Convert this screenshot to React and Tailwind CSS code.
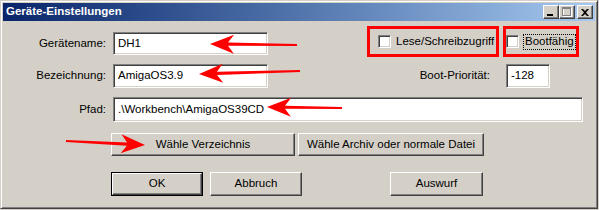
import React from "react";

const raised =
  "border border-t-white border-l-white border-b-[#404040] border-r-[#404040] shadow-[inset_-1px_-1px_0_#808080,inset_1px_1px_0_#d4d0c8] bg-[#d4d0c8]";
const sunken =
  "border border-t-[#808080] border-l-[#808080] border-b-white border-r-white shadow-[inset_1px_1px_0_#404040,inset_-1px_-1px_0_#d4d0c8] bg-white";

// red annotation arrows, tail -> tip
const arrows = [
  [297, 45, 210, 44],
  [300, 71, 199, 74],
  [342, 108, 267, 107],
  [66, 141, 145, 145],
];

function arrowPoints(x1, y1, x2, y2) {
  const L = 24;
  const W = 9.5;
  const t = 1.6;
  const notch = 6;
  const len = Math.hypot(x2 - x1, y2 - y1);
  const ux = (x2 - x1) / len;
  const uy = (y2 - y1) / len;
  const nx = -uy;
  const ny = ux;
  const bx = x2 - ux * L;
  const by = y2 - uy * L;
  const kx = x2 - ux * (L - notch);
  const ky = y2 - uy * (L - notch);
  const pts = [
    [x2, y2],
    [bx + nx * W, by + ny * W],
    [kx + nx * t, ky + ny * t],
    [x1 + nx * t * 0.7, y1 + ny * t * 0.7],
    [x1 - nx * t * 0.7, y1 - ny * t * 0.7],
    [kx - nx * t, ky - ny * t],
    [bx - nx * W, by - ny * W],
  ];
  return pts.map((p) => p.join(",")).join(" ");
}

function Field({ value, className }) {
  return (
    <div className={`${sunken} flex items-center pl-[4px] ${className}`}>
      {value}
    </div>
  );
}

function Button({ children, className }) {
  return (
    <div className={`${raised} flex items-center justify-center ${className}`}>
      {children}
    </div>
  );
}

function Checkbox() {
  return <div className={`${sunken} w-[13px] h-[13px] shrink-0`} />;
}

function TitleButton({ children, className = "" }) {
  return (
    <div className={`${raised} w-[16px] h-[14px] flex items-center justify-center ${className}`}>
      {children}
    </div>
  );
}

export default function App() {
  return (
    <div className="relative w-[599px] h-[210px] bg-[#d4d0c8] font-['Liberation_Sans',Arial,sans-serif] text-[11.5px] text-black overflow-hidden">
      <div className="w-[598px] h-[209px] border border-t-[#d4d0c8] border-l-[#d4d0c8] border-b-[#404040] border-r-[#404040] shadow-[inset_1px_1px_0_white,inset_-1px_-1px_0_#808080] p-[2px]">
        {/* Title bar */}
        <div className="h-[18px] flex items-center bg-gradient-to-r from-[#0a246a] to-[#a6caf0] pl-[3px] pr-[2px]">
          <span className="text-white font-bold text-[11.5px]">Geräte-Einstellungen</span>
          <div className="ml-auto flex items-center">
            <TitleButton>
              <svg width="8" height="9" viewBox="0 0 8 9">
                <rect x="0" y="6" width="6" height="2" fill="#000" />
              </svg>
            </TitleButton>
            <TitleButton>
              <svg width="10" height="10" viewBox="0 0 10 10">
                <rect x="1.5" y="1.5" width="8" height="8" fill="none" stroke="#fff" />
                <rect x="0.5" y="0.5" width="8" height="8" fill="none" stroke="#808080" />
                <rect x="0" y="1" width="9" height="1" fill="#808080" />
              </svg>
            </TitleButton>
            <TitleButton className="ml-[2px]">
              <svg width="8" height="7" viewBox="0 0 8 7">
                <path d="M0 0h2l2 2 2-2h2L5 3.5 8 7H6L4 5 2 7H0l3-3.5z" fill="#000" />
              </svg>
            </TitleButton>
          </div>
        </div>

        {/* Row 1 */}
        <div className="flex h-[31px] mt-[5px]">
          <div className="flex items-center h-[23px] mt-[6px]">
            <div className="w-[103px] text-right">Gerätename:</div>
            <Field value="DH1" className="ml-[7px] w-[155px] h-[23px]" />
          </div>
          <div className="ml-[99px] w-[132px] h-[31px] border-[3px] border-[#ff0000] flex items-center pl-[8px]">
            <Checkbox />
            <span className="ml-[5px] whitespace-nowrap">Lese/Schreibzugriff</span>
          </div>
          <div className="ml-[4px] w-[76px] h-[31px] border-[3px] border-[#ff0000] flex items-center">
            <Checkbox />
            <span className="ml-[4px] h-[16px] px-[1px] flex items-center border border-dotted border-black whitespace-nowrap">
              Bootfähig
            </span>
          </div>
        </div>

        {/* Row 2 */}
        <div className="flex items-center h-[24px] mt-[7px]">
          <div className="w-[103px] text-right">Bezeichnung:</div>
          <Field value="AmigaOS3.9" className="ml-[7px] w-[155px] h-[24px]" />
          <div className="w-[222px] text-right">Boot-Priorität:</div>
          <Field value="-128" className="ml-[16px] w-[44px] h-[24px]" />
        </div>

        {/* Row 3 */}
        <div className="flex items-center h-[25px] mt-[9px]">
          <div className="w-[103px] text-right">Pfad:</div>
          <Field value={".\\Workbench\\AmigaOS39CD"} className="ml-[7px] w-[470px] h-[25px]" />
        </div>

        {/* Row 4 */}
        <div className="flex h-[23px] mt-[11px] ml-[108px]">
          <Button className="w-[184px] h-[23px]">Wähle Verzeichnis</Button>
          <Button className="ml-[3px] w-[186px] h-[23px]">Wähle Archiv oder normale Datei</Button>
        </div>

        {/* Row 5 */}
        <div className="flex h-[24px] mt-[16px] ml-[108px]">
          <div className="w-[92px] h-[24px] border border-black">
            <Button className="w-full h-full">OK</Button>
          </div>
          <Button className="ml-[7px] w-[92px] h-[24px]">Abbruch</Button>
          <Button className="ml-[88px] w-[93px] h-[24px]">Auswurf</Button>
        </div>
      </div>

      {/* annotation arrows */}
      <svg className="absolute inset-0 pointer-events-none" width="599" height="210">
        {arrows.map(([x1, y1, x2, y2], i) => (
          <polygon key={i} points={arrowPoints(x1, y1, x2, y2)} fill="#ff0000" />
        ))}
      </svg>
    </div>
  );
}
